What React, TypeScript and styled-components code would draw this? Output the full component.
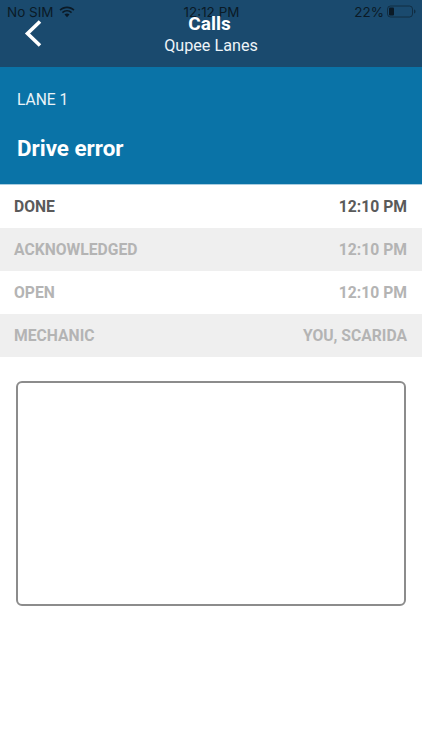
import React from 'react';
import styled, { createGlobalStyle } from 'styled-components';

interface Call {
  label: string;
  value: string;
}

const rows: Call[] = [
  { label: 'DONE', value: '12:10 PM' },
  { label: 'ACKNOWLEDGED', value: '12:10 PM' },
  { label: 'OPEN', value: '12:10 PM' },
  { label: 'MECHANIC', value: 'YOU, SCARIDA' },
];

const GlobalStyle = createGlobalStyle`
  html, body {
    margin: 0;
    padding: 0;
    background: #fff;
  }
  * {
    box-sizing: border-box;
  }
`;

const Page = styled.div`
  width: 422px;
  height: 750px;
  overflow: hidden;
  background: #fff;
  font-family: Roboto, "Liberation Sans", sans-serif;
`;

const NavBar = styled.header`
  position: relative;
  height: 67px;
  background: #1a4a6e;
`;

const StatusBar = styled.div`
  display: grid;
  grid-template-columns: 1fr auto 1fr;
  align-items: center;
  height: 23px;
  padding: 0 6px 0 7px;
  font-family: Inter, "Liberation Sans", sans-serif;
  font-size: 13.5px;
  color: #0b1a26;
`;

const StatusLeft = styled.div`
  display: flex;
  align-items: center;
  gap: 5px;
`;

const StatusRight = styled.div`
  display: flex;
  align-items: center;
  justify-content: flex-end;
  gap: 3px;
`;

const BackIcon = styled.svg`
  position: absolute;
  left: 23px;
  top: 18px;
  width: 20px;
  height: 30px;
`;

const NavTitles = styled.div`
  position: absolute;
  top: 13px;
  left: 0;
  right: 0;
  display: flex;
  flex-direction: column;
  align-items: center;
  color: #fff;
`;

const NavTitle = styled.div`
  padding-right: 3px;
  font-size: 19px;
  font-weight: 700;
  line-height: 22px;
`;

const NavSubtitle = styled.div`
  font-size: 16.2px;
  line-height: 22px;
  color: #eef4f8;
`;

const Hero = styled.section`
  height: 118px;
  padding: 23px 17px 0;
  background: #0a73a7;
  border-bottom: 1px solid #a9cde0;
  color: #fff;
`;

const Lane = styled.div`
  font-size: 15.6px;
  line-height: 21px;
  color: #eaf3f8;
`;

const Fault = styled.h1`
  margin: 23px 0 0;
  font-size: 22.4px;
  font-weight: 700;
  line-height: 28px;
`;

const Row = styled.div<{ $active: boolean; $shaded: boolean }>`
  display: flex;
  justify-content: space-between;
  align-items: center;
  height: 43px;
  padding: 0 15px 0 14px;
  font-size: 15.7px;
  font-weight: 700;
  color: ${(p) => (p.$active ? '#5a5a5a' : '#b4b4b4')};
  background: ${(p) => (p.$shaded ? '#efefef' : '#fff')};
`;

const Notes = styled.div`
  height: 225px;
  margin: 24px 16px 0;
  border: 2px solid #8c8c8c;
  border-radius: 6px;
`;

const App: React.FC = () => (
  <Page>
    <GlobalStyle />
    <NavBar>
      <StatusBar>
        <StatusLeft>
          <span>No SIM</span>
          <svg width="16" height="12" viewBox="0 0 16 12" fill="#0b1a26">
            <path d="M8 2.2c2.5 0 4.7 1 6.4 2.6l1.1-1.2C13.5 1.7 10.9.5 8 .5S2.5 1.7.5 3.6l1.1 1.2C3.3 3.2 5.5 2.2 8 2.2z" />
            <path d="M8 5.6c1.5 0 2.9.6 4 1.6l1.1-1.2C11.7 4.7 10 4 8 4S4.300 4.700 2.900 6l1.100 1.200c1.100-1 2.500-1.600 4-1.600z" />
            <path d="M8 7.500c-1 0-1.800.4-2.500 1L8 11.300l2.500-2.800c-.7-.6-1.500-1-2.500-1z" />
          </svg>
        </StatusLeft>
        <span>12:12 PM</span>
        <StatusRight>
          <span>22%</span>
          <svg width="29" height="13" viewBox="0 0 29 13">
            <rect x="0.5" y="1" width="25" height="11" rx="3" fill="none" stroke="#0b1a26" strokeOpacity="0.6" />
            <rect x="2" y="2.500" width="5" height="8" rx="1" fill="#0b1a26" />
            <path d="M27 4.500c1 .3 1.500 1 1.500 2s-.5 1.700-1.500 2z" fill="#0b1a26" fillOpacity="0.6" />
          </svg>
        </StatusRight>
      </StatusBar>
      <BackIcon viewBox="0 0 20 30" fill="none">
        <path d="M17 3.500 L4.500 15.500 L17 27.500" stroke="#fff" strokeWidth="3.600" />
      </BackIcon>
      <NavTitles>
        <NavTitle>Calls</NavTitle>
        <NavSubtitle>Qupee Lanes</NavSubtitle>
      </NavTitles>
    </NavBar>
    <Hero>
      <Lane>LANE 1</Lane>
      <Fault>Drive error</Fault>
    </Hero>
    {rows.map((row, i) => (
      <Row key={row.label} $active={i === 0} $shaded={i % 2 === 1}>
        <span>{row.label}</span>
        <span>{row.value}</span>
      </Row>
    ))}
    <Notes />
  </Page>
);

export default App;
